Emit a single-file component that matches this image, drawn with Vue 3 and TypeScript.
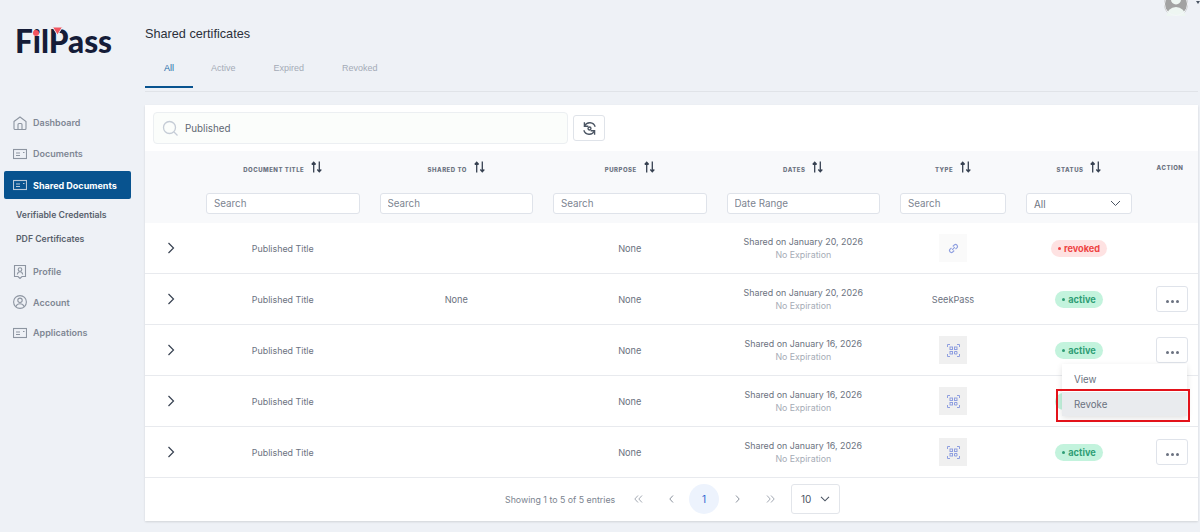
<script setup lang="ts">
interface Row {
  shared: string
  sharedTo: string
  type: 'link' | 'scan' | 'text'
  status: 'active' | 'revoked'
  action: boolean
  menu?: boolean
}

const rows: Row[] = [
  { shared: 'Shared on January 20, 2026', sharedTo: '', type: 'link', status: 'revoked', action: false },
  { shared: 'Shared on January 20, 2026', sharedTo: 'None', type: 'text', status: 'active', action: true },
  { shared: 'Shared on January 16, 2026', sharedTo: '', type: 'scan', status: 'active', action: true, menu: true },
  { shared: 'Shared on January 16, 2026', sharedTo: '', type: 'scan', status: 'active', action: false },
  { shared: 'Shared on January 16, 2026', sharedTo: '', type: 'scan', status: 'active', action: true },
]
const tabs = ['All', 'Active', 'Expired', 'Revoked']
const columns = [
  { label: 'Document Title', hint: 'Search' },
  { label: 'Shared to', hint: 'Search' },
  { label: 'Purpose', hint: 'Search' },
  { label: 'Dates', hint: 'Date Range' },
  { label: 'Type', hint: 'Search' },
]
</script>

<template>
  <div class="page">
    <aside class="sidebar">
      <div class="logo">
        <span class="logo-text">FilPass</span>
        <i class="logo-dot"></i>
        <svg class="logo-tri" width="13" height="10" viewBox="0 0 13 10"><path d="M1.500 1h10L6.500 9z" fill="#f2545f" stroke="#eef1f6" stroke-width="1" /></svg>
      </div>
      <nav class="nav">
        <a class="nav-item">
          <svg class="nav-icon" viewBox="0 0 14 14" fill="none" stroke="#8d95a1" stroke-width="1.100"><path d="M1 5.500 7 1l6 4.500v7a1 1 0 0 1-1 1H2a1 1 0 0 1-1-1z" /><path d="M5 13.500V8.500a1 1 0 0 1 1-1h2a1 1 0 0 1 1 1v5" /></svg>
          Dashboard
        </a>
        <a class="nav-item">
          <svg class="nav-icon" viewBox="0 0 14 10" fill="none" stroke="#8d95a1" stroke-width="1.100"><rect x=".5" y=".5" width="13" height="9" /><path d="M3 4h4M3 6.500h4M10 3.500h1.500" /></svg>
          Documents
        </a>
        <a class="nav-item active">
          <svg class="nav-icon" viewBox="0 0 14 10" fill="none" stroke="#b9c9d9" stroke-width="1.100"><rect x=".5" y=".5" width="13" height="9" /><path d="M3 4h4M3 6.500h4M10 3.500h1.500" /></svg>
          Shared Documents
        </a>
        <a class="sub-item">Verifiable Credentials</a>
        <a class="sub-item">PDF Certificates</a>
        <a class="nav-item profile">
          <svg class="nav-icon" viewBox="0 0 14 14" fill="none" stroke="#8d95a1" stroke-width="1.100"><path d="M1.500.500h11v11H9L7 13.500 5 11.500H1.500z" /><circle cx="7" cy="4.500" r="1.800" /><path d="M4.300 9.500c.4-2 1.500-2.700 2.700-2.700s2.300.7 2.700 2.700" /></svg>
          Profile
        </a>
        <a class="nav-item account">
          <svg class="nav-icon" viewBox="0 0 14 14" fill="none" stroke="#8d95a1" stroke-width="1.100"><circle cx="7" cy="7" r="6.400" /><circle cx="7" cy="5.300" r="2.200" /><path d="M3 11.500c.7-2 2.200-2.700 4-2.700s3.300.7 4 2.700" /></svg>
          Account
        </a>
        <a class="nav-item">
          <svg class="nav-icon" viewBox="0 0 14 10" fill="none" stroke="#8d95a1" stroke-width="1.100"><rect x=".5" y=".5" width="13" height="9" /><path d="M3 4h4M3 6.500h4M10 3.500h1.500" /></svg>
          Applications
        </a>
      </nav>
    </aside>

    <main class="main">
      <div class="avatar">
        <svg width="24" height="24" viewBox="0 0 24 24"><circle cx="12" cy="12" r="12" fill="#a2a2a2" /><circle cx="12" cy="7.500" r="5" fill="#eef6f2" /><ellipse cx="12" cy="24" rx="9.500" ry="9" fill="#eef6f2" /><circle cx="12" cy="12" r="11.500" fill="none" stroke="#f4f6f9" /></svg>
      </div>
      <i class="avatar-caret"></i>
      <h1 class="title">Shared certificates</h1>
      <div class="tabs">
        <span v-for="(tab, i) in tabs" :key="tab" class="tab" :class="{ on: i === 0 }">{{ tab }}</span>
      </div>

      <section class="card">
        <div class="toolbar">
          <div class="search">
            <svg width="17" height="17" viewBox="0 0 17 17" fill="none" stroke="#c5ccd6" stroke-width="1.300"><circle cx="7.500" cy="7.500" r="6" /><path d="m12 12 3.500 3.500" /></svg>
            <span>Published</span>
          </div>
          <button class="refresh">
            <svg width="17" height="17" viewBox="0 0 15 15" fill="none" stroke="#4b5563" stroke-width="1.200"><path d="M3 2v3.500h3.500" /><path d="M3.200 5.300A5 5 0 0 1 12.500 6" /><path d="M12 13V9.500H8.500" /><path d="M11.800 9.700A5 5 0 0 1 2.500 9" /><circle cx="7.500" cy="7.500" r="1.300" /></svg>
          </button>
        </div>

        <div class="thead">
          <div class="grid head-row">
            <div></div>
            <div v-for="col in columns" :key="col.label" class="th">
              {{ col.label }}
              <svg class="sort" width="11" height="12" viewBox="0 0 11 12" fill="none" stroke="#374151" stroke-width="1.300"><path d="M2.700 11.500V1.500M.7 3.500l2-2.200 2 2.200M8.300.500v10M6.300 8.500l2 2.200 2-2.200" /></svg>
            </div>
            <div class="th">
              Status
              <svg class="sort" width="11" height="12" viewBox="0 0 11 12" fill="none" stroke="#374151" stroke-width="1.300"><path d="M2.700 11.500V1.500M.7 3.500l2-2.200 2 2.200M8.300.500v10M6.300 8.500l2 2.200 2-2.200" /></svg>
            </div>
            <div class="th action-th">Action</div>
          </div>
          <div class="grid filter-row">
            <div></div>
            <div v-for="col in columns" :key="col.label" class="filter">
              <input :placeholder="col.hint" />
            </div>
            <div class="filter">
              <div class="select">
                <span class="select-value">All</span>
                <svg width="11" height="7" viewBox="0 0 11 7" fill="none" stroke="#4b5563" stroke-width="1"><path d="m1 1 4.500 4.500L10 1" /></svg>
              </div>
            </div>
            <div></div>
          </div>
        </div>

        <div v-for="(row, i) in rows" :key="i" class="grid tr">
          <div class="expander">
            <svg width="8" height="12" viewBox="0 0 8 12" fill="none" stroke="#374151" stroke-width="1.200"><path d="m1.500 1 5 5-5 5" /></svg>
          </div>
          <div class="td title-cell">Published Title</div>
          <div class="td">{{ row.sharedTo }}</div>
          <div class="td">None</div>
          <div class="td dates">
            <span>{{ row.shared }}</span>
            <span class="expiry">No Expiration</span>
          </div>
          <div class="td">
            <span v-if="row.type === 'text'">SeekPass</span>
            <span v-else-if="row.type === 'link'" class="type-box link">
              <svg width="13" height="13" viewBox="0 0 13 13" fill="none" stroke="#8f9fe0" stroke-width="1.200"><path d="M5.200 7.800 7.800 5.200" /><path d="M4.500 5.800 2.700 7.600a2 2 0 0 0 2.700 2.700l1.800-1.800" /><path d="M5.800 4.500 7.600 2.700a2 2 0 0 1 2.700 2.700L8.500 7.200" /></svg>
            </span>
            <span v-else class="type-box">
              <svg width="13" height="13" viewBox="0 0 13 13" fill="none" stroke="#8f9fe0" stroke-width="1"><path d="M.5 3V.5H3M10 .5h2.500V3M12.500 10v2.500H10M3 12.500H.5V10" /><rect x="3" y="3" width="2.500" height="2.500" /><rect x="7.500" y="3" width="2.500" height="2.500" /><rect x="3" y="7.500" width="2.500" height="2.500" /><path d="M7.500 7.500H10V10H7.500z" /></svg>
            </span>
          </div>
          <div class="td">
            <span class="pill" :class="row.status"><i></i>{{ row.status }}</span>
          </div>
          <div class="td action-cell">
            <button v-if="row.action" class="dots"><i></i><i></i><i></i></button>
            <div v-if="row.menu" class="menu">
              <div class="menu-item">View</div>
              <div class="menu-item hover">Revoke</div>
            </div>
            <div v-if="row.menu" class="callout"></div>
          </div>
        </div>

        <div class="pager">
          <span class="count">Showing 1 to 5 of 5 entries</span>
          <svg class="pg first" width="9" height="8" viewBox="0 0 9 8" fill="none" stroke="#a3a9b3"><path d="M4 .5.800 4 4 7.500M8 .5 4.800 4 8 7.500" /></svg>
          <svg class="pg prev" width="5" height="8" viewBox="0 0 5 8" fill="none" stroke="#8a919c"><path d="M4 .5.800 4 4 7.500" /></svg>
          <span class="page-num">1</span>
          <svg class="pg next" width="5" height="8" viewBox="0 0 5 8" fill="none" stroke="#8a919c"><path d="m1 .5 3.200 3.500L1 7.500" /></svg>
          <svg class="pg last" width="9" height="8" viewBox="0 0 9 8" fill="none" stroke="#a3a9b3"><path d="M1 .5 4.200 4 1 7.500M5 .5 8.200 4 5 7.500" /></svg>
          <div class="size">
            <span>10</span>
            <svg width="10" height="6" viewBox="0 0 10 6" fill="none" stroke="#4b5563" stroke-width="1.100"><path d="m1 .8 4 4 4-4" /></svg>
          </div>
        </div>
      </section>
    </main>
  </div>
</template>

<style>
html, body { margin: 0; background: #eef1f6; }
</style>

<style scoped>
.page { display: flex; width: 1200px; height: 532px; overflow: hidden; background: #eef1f6; font-family: Inter, "Liberation Sans", sans-serif; color: #6b7280; }
.sidebar { width: 145px; flex: none; }
.logo { position: relative; margin: 23px 0 0 15px; height: 36px; }
.logo-text { font-family: Lato, Inter, sans-serif; font-weight: 900; font-size: 31.500px; line-height: 36px; color: #151c38; }
.logo-dot { position: absolute; left: 17.500px; top: 7px; width: 6px; height: 6px; border-radius: 50%; background: #f2545f; }
.logo-tri { position: absolute; left: 36px; top: 3px; }
.nav { display: flex; flex-direction: column; margin-top: 48px; }
.nav-item { display: flex; align-items: center; gap: 6px; height: 31px; padding-left: 13px; font-size: 9px; font-weight: 600; color: #7f8794; }
.nav-icon { width: 14px; height: 14px; flex: none; }
.nav-item.active { height: 28px; margin: 2px 14px 4px 4px; padding-left: 9px; border-radius: 2px; background: #08538f; font-weight: 700; color: #fff; }
.sub-item { padding-left: 16px; height: 24px; line-height: 24px; font-size: 8.700px; font-weight: 600; color: #59616d; }
.nav-item.profile { margin-top: 5px; }
.nav-item.account { height: 30px; }

.main { position: relative; flex: 1; margin-right: 2px; min-width: 0; }
.avatar { position: absolute; right: 10px; top: -8px; width: 24px; height: 24px; }
.avatar svg { display: block; }
.avatar-caret { position: absolute; right: -2px; top: 1px; width: 0; height: 0; border: 2.500px solid transparent; border-top: 3px solid #4b5563; }
.title { margin: 0; padding-top: 26px; font: 400 12.700px/17px "Liberation Sans", Arial, sans-serif; color: #2b303a; }
.tabs { display: flex; margin-top: 9px; margin-bottom: 13px; height: 39px; border-bottom: 1px solid #e0e3e8; }
.tab { height: 36px; padding: 9px 19px 0; box-sizing: border-box; text-align: center; font: 400 9px/14px "Liberation Sans", Arial, sans-serif; color: #a4abb6; border-bottom: 2px solid transparent; }
.tab.on { width: 48px; margin-right: -1px; padding: 9px 0 0; color: #1c6aa8; border-bottom-color: #08538f; }

.card { background: #fff; height: 416px; box-shadow: 0 1px 2px rgba(0, 0, 0, .12); }
.toolbar { display: flex; align-items: center; gap: 5px; height: 46px; padding-left: 8px; }
.search { display: flex; align-items: center; gap: 6px; box-sizing: border-box; width: 415px; height: 32px; padding-left: 8px; border: 1px solid #eceff2; border-radius: 4px; background: #fbfdfb; font-size: 9.800px; color: #5f6773; }
.refresh { display: flex; align-items: center; justify-content: center; width: 32px; height: 26px; padding: 0; background: #fff; border: 1px solid #dfe3e9; border-radius: 3px; }

.grid { display: grid; grid-template-columns: 51px repeat(4, 173.500px) 126px 126px 1fr; }
.thead { height: 72px; background: #f8f9fb; }
.head-row { height: 34px; align-items: center; padding-top: 2px; box-sizing: border-box; }
.th { display: flex; align-items: center; justify-content: center; gap: 7px; font-size: 6px; font-weight: 800; letter-spacing: .5px; text-transform: uppercase; color: #6b7280; }
.sort { margin-top: -4px; }
.action-th { margin-top: -4px; }
.filter-row { padding-top: 8px; }
.filter { padding: 0 10px; }
.filter input, .select { display: flex; align-items: center; box-sizing: border-box; width: 100%; height: 21px; padding: 0 7px; border: 1px solid #dfe3ea; border-radius: 3px; background: #fff; font: 400 9.800px Inter, sans-serif; color: #6b7280; outline: none; }
.filter input::placeholder { color: #7c8490; opacity: 1; }
.select { justify-content: space-between; padding-right: 10px; }
.select-value { padding-top: 2px; }

.tr { height: 51px; border-bottom: 1px solid #e8eaee; box-sizing: border-box; }
.expander { display: flex; align-items: center; padding-left: 22px; }
.td { position: relative; display: flex; align-items: center; justify-content: center; font-size: 9.200px; color: #6b7280; }
.title-cell { font-size: 8.900px; }
.dates { flex-direction: column; gap: 2px; font-size: 8.900px; }
.expiry { font-size: 8.800px; color: #a6acb6; }
.type-box { display: flex; align-items: center; justify-content: center; width: 28px; height: 28px; background: #f0f0f0; }
.type-box.link { background: #fafafa; }
.pill { display: inline-flex; align-items: center; gap: 3px; height: 17px; padding: 0 7px; border-radius: 9px; font-size: 9.200px; font-weight: 700; }
.pill i { width: 3px; height: 3px; border-radius: 50%; background: currentColor; }
.pill.active { background: #c3f3dd; color: #2f9e75; }
.pill.revoked { background: #fee2e2; color: #ef4444; }
.action-cell { padding-left: 4px; }
.dots { display: flex; align-items: center; justify-content: center; gap: 2px; width: 32px; height: 26px; padding: 4px 0 0; background: #fff; border: 1px solid #dfe3ea; border-radius: 3px; }
.dots i { width: 3px; height: 3px; border-radius: 50%; background: #6b7280; }
.menu { position: absolute; z-index: 2; top: 39px; right: 11px; width: 125px; background: #fff; box-shadow: 0 2px 6px rgba(0, 0, 0, .12); }
.menu-item { height: 28px; padding-left: 12px; line-height: 32px; font-size: 9.700px; color: #6b7280; }
.menu-item.hover { height: 24px; line-height: 26px; background: #e9ebee; }
.callout { position: absolute; z-index: 3; top: 64px; right: 8px; box-sizing: border-box; width: 134px; height: 33px; border: 2px solid #e3121a; }

.pager { display: flex; align-items: center; height: 42px; padding-left: 360px; font-size: 8.800px; color: #7c8490; }
.count { width: 128.500px; }
.pg { flex: none; }
.pg.first { margin-right: 26px; }
.pg.prev { margin-right: 15.500px; }
.pg.next { margin-left: 15.500px; margin-right: 26px; }
.pg.last { margin-right: 16.500px; }
.page-num { display: flex; align-items: center; justify-content: center; width: 30px; height: 30px; border-radius: 50%; background: #edf3fd; color: #2f66d0; font-size: 10px; }
.size { display: flex; align-items: center; justify-content: space-between; box-sizing: border-box; width: 49px; height: 30px; padding: 0 9px; border: 1px solid #e2e5ea; border-radius: 3px; font-size: 10px; color: #4b5563; }
</style>
